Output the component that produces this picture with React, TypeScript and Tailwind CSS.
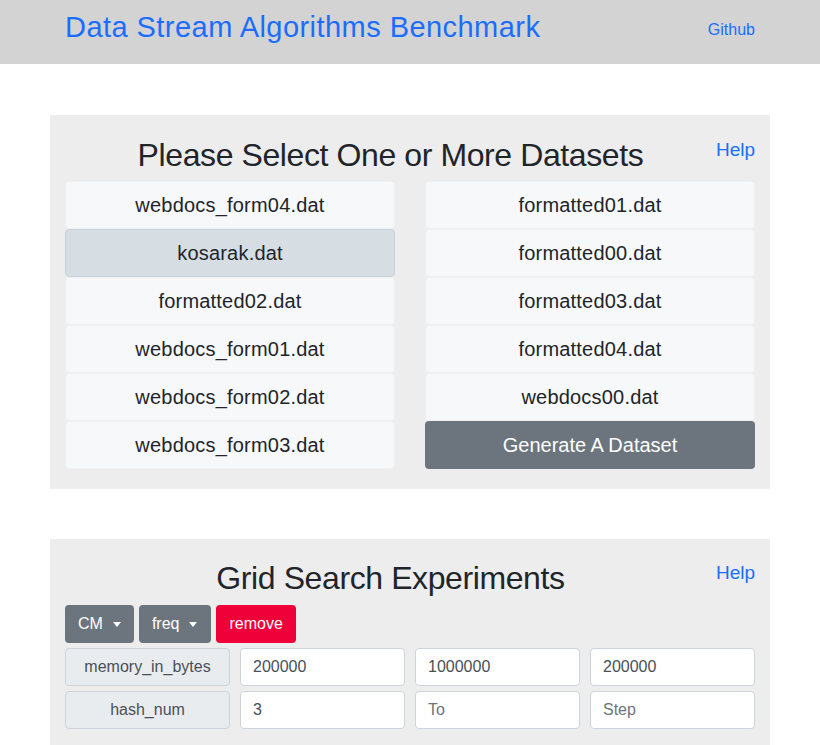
import React from "react";

// data
const LEFT = [
  "webdocs_form04.dat",
  "kosarak.dat",
  "formatted02.dat",
  "webdocs_form01.dat",
  "webdocs_form02.dat",
  "webdocs_form03.dat",
];
const RIGHT = [
  "formatted01.dat",
  "formatted00.dat",
  "formatted03.dat",
  "formatted04.dat",
  "webdocs00.dat",
];
const SELECTED = "kosarak.dat";

const Caret = () => (
  <span className="inline-block ml-[10px] w-0 h-0 border-l-[4px] border-r-[4px] border-t-[5px] border-l-transparent border-r-transparent border-t-white align-middle" />
);

const DatasetItem = ({ name }: { name: string }) => {
  const active = name === SELECTED;
  return (
    <div
      className={
        active
          ? "h-[48px] flex items-center justify-center rounded-[4px] border border-[#c9d1d9] bg-[#d6dde3] text-[20px] text-[#212529] tracking-[0.2px]"
          : "h-[48px] flex items-center justify-center rounded-[4px] border border-[#eef0f2] bg-[#f7f8f9] text-[20px] text-[#212529] tracking-[0.2px]"
      }
    >
      {name}
    </div>
  );
};

const SectionHeading = ({ title }: { title: string }) => (
  <div className="flex items-start">
    <h2 className="flex-1 text-center text-[32px] leading-[38px] text-[#212529] tracking-[-0.4px]">
      {title}
    </h2>
    <a className="mt-[1px] text-[19px] leading-[26px] text-[#1a6dff]">Help</a>
  </div>
);

const App = () => {
  return (
    <div className="min-h-[745px] bg-white font-['Liberation_Sans',Arial,sans-serif]">
      {/* header */}
      <div className="h-[64px] bg-[#d3d3d3]">
        <div className="w-[690px] mx-auto flex justify-between">
          <h1 className="text-[29px] leading-[34px] pt-[10px] text-[#1a6dff] tracking-[0.45px]">
            Data Stream Algorithms Benchmark
          </h1>
          <a className="text-[16px] leading-[20px] pt-[20px] text-[#1a6dff]">Github</a>
        </div>
      </div>

      {/* datasets */}
      <div className="w-[720px] mx-auto mt-[51px] bg-[#ededed] px-[15px] pt-[21px] pb-[20px]">
        <SectionHeading title="Please Select One or More Datasets" />
        <div className="grid grid-cols-2 gap-x-[30px] mt-[7px]">
          <div className="flex flex-col">
            {LEFT.map((d) => (
              <DatasetItem key={d} name={d} />
            ))}
          </div>
          <div className="flex flex-col">
            {RIGHT.map((d) => (
              <DatasetItem key={d} name={d} />
            ))}
            <button className="h-[48px] rounded-[4px] bg-[#6c757d] text-white text-[20px]">
              Generate A Dataset
            </button>
          </div>
        </div>
      </div>

      {/* grid search */}
      <div className="w-[720px] mx-auto mt-[50px] bg-[#ededed] px-[15px] pt-[20px] pb-[20px]">
        <SectionHeading title="Grid Search Experiments" />
        <div className="flex gap-[5px] mt-[8px]">
          <button className="h-[38px] px-[13px] rounded-[4px] bg-[#6c757d] text-white text-[16px]">
            CM
            <Caret />
          </button>
          <button className="h-[38px] pl-[13px] pr-[14px] rounded-[4px] bg-[#6c757d] text-white text-[16px]">
            freq
            <Caret />
          </button>
          <button className="h-[38px] px-[13px] rounded-[4px] bg-[#ef0039] text-white text-[16px]">
            remove
          </button>
        </div>
        <div className="grid grid-cols-4 gap-x-[10px] gap-y-[5px] mt-[5px]">
          <div className="h-[38px] flex items-center justify-center rounded-[4px] border border-[#ced4da] bg-[#e9ecef] text-[16px] text-[#495057]">
            memory_in_bytes
          </div>
          <input className="h-[38px] px-[12px] rounded-[4px] border border-[#ced4da] bg-white text-[16px] text-[#495057]" defaultValue="200000" />
          <input className="h-[38px] px-[12px] rounded-[4px] border border-[#ced4da] bg-white text-[16px] text-[#495057]" defaultValue="1000000" />
          <input className="h-[38px] px-[12px] rounded-[4px] border border-[#ced4da] bg-white text-[16px] text-[#495057]" defaultValue="200000" />
          <div className="h-[38px] flex items-center justify-center rounded-[4px] border border-[#ced4da] bg-[#e9ecef] text-[16px] text-[#495057]">
            hash_num
          </div>
          <input className="h-[38px] px-[12px] rounded-[4px] border border-[#ced4da] bg-white text-[16px] text-[#495057]" defaultValue="3" />
          <input className="h-[38px] px-[12px] rounded-[4px] border border-[#ced4da] bg-white text-[16px] text-[#495057] placeholder:text-[#6c757d]" placeholder="To" />
          <input className="h-[38px] px-[12px] rounded-[4px] border border-[#ced4da] bg-white text-[16px] text-[#495057] placeholder:text-[#6c757d]" placeholder="Step" />
        </div>
      </div>
    </div>
  );
};

export default App;
